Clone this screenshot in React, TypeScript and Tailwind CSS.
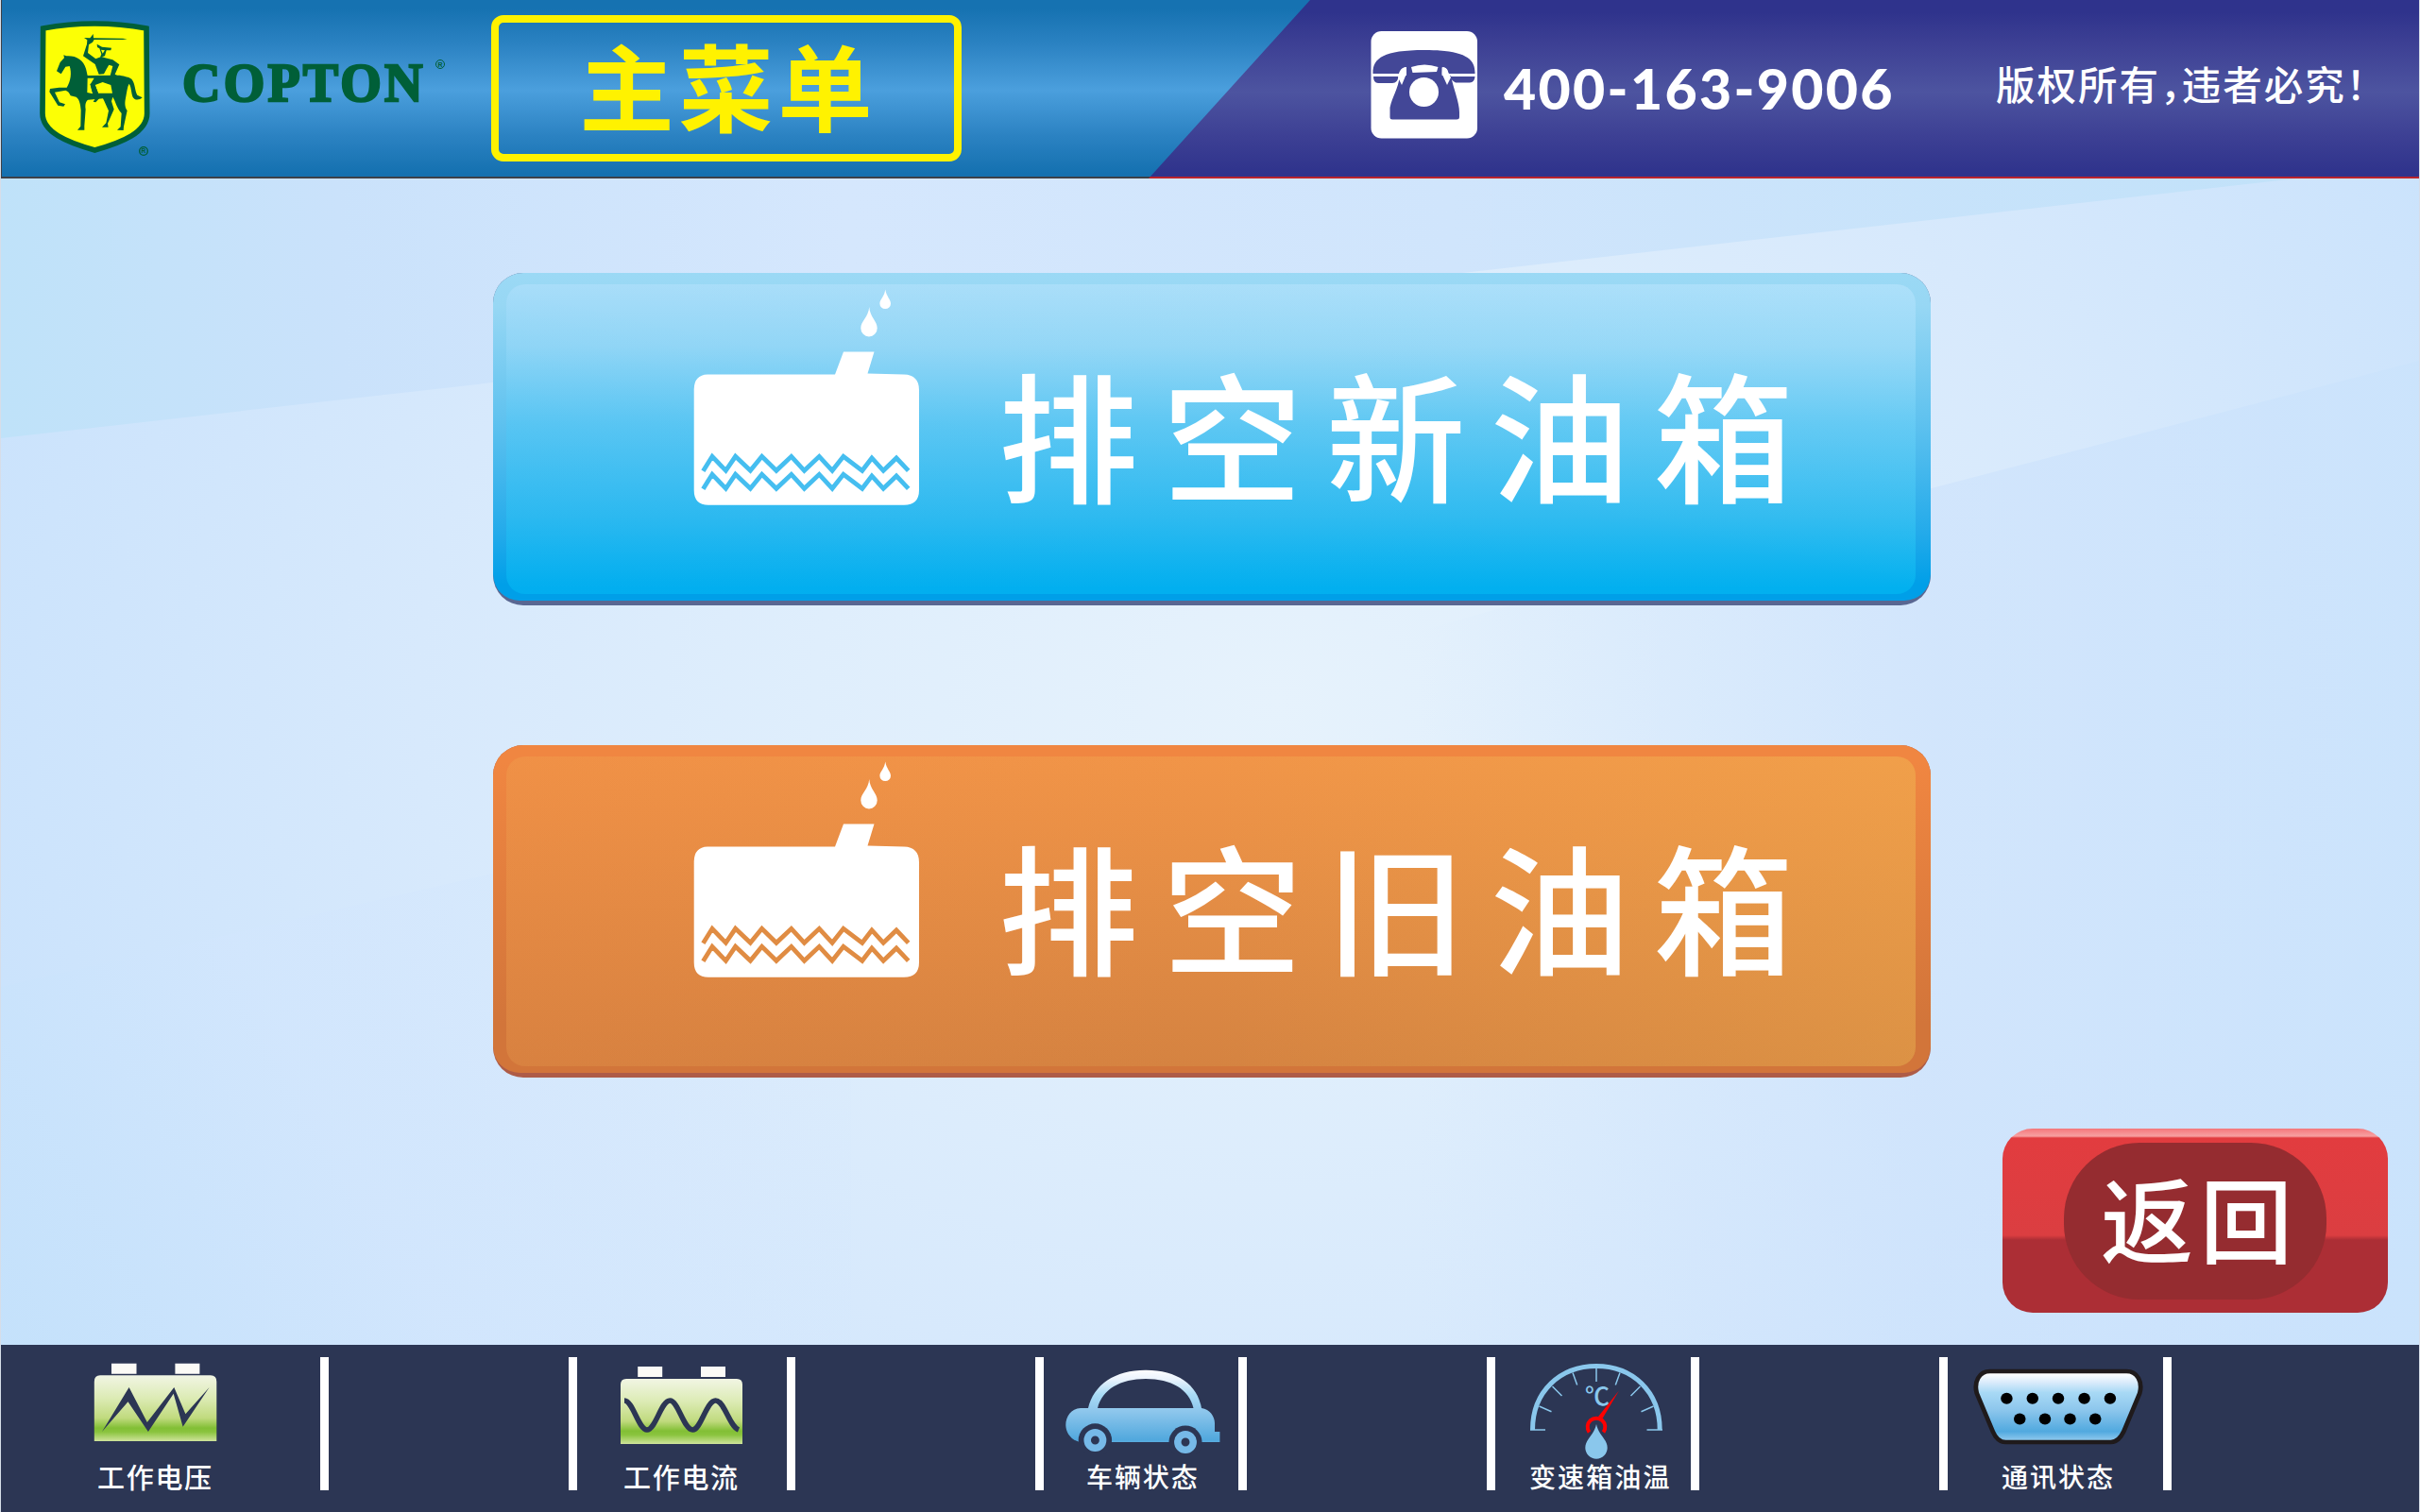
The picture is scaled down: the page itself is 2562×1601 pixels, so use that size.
import React from "react";

const CJK = "font-['Noto_Sans_CJK_SC',sans-serif]";

function Shield() {
  return (
    <svg viewBox="0 0 450 510" className="h-[170px] w-[150px] shrink-0">
      <path
        d="M47 60 Q210 30 375 60 L377 330 C377 390 300 422 211 447 C122 422 45 390 45 330 Z"
        fill="#fcff05"
        stroke="#005f38"
        strokeWidth="17"
        strokeLinejoin="miter"
      />
      <g fill="#005f38">
        <path
          fillRule="evenodd"
          d="M112 145 L121 148 C152 146 174 160 183 188 L188 210 L290 209 C308 213 318 214 328 221 C340 235 338 258 346 272 L362 280 C352 289 338 289 332 279 C326 262 327 245 320 236 C314 246 313 262 309 282 C305 300 308 314 314 321 L303 372 L302 384 L282 383 L293 373 L296 330 C280 312 278 294 268 278 L264 292 L272 317 L252 362 L254 374 L234 374 L247 361 L255 322 C247 305 242 292 237 283 L190 287 C182 291 180 302 182 317 L178 370 L178 383 L156 383 L166 371 L167 320 C165 296 161 285 152 278 L134 274 C130 264 125 259 118 257 L84 263 L99 295 L117 301 L112 308 L94 305 L67 262 L69 252 L98 248 L122 248 C135 228 138 200 131 180 L118 182 L104 205 L90 196 L101 168 L114 154 Z M188 218 L187 264 L205 268 L197 238 L209 218 Z M212 240 L236 231 L262 240 L267 266 L222 266 Z"
        />
        <path d="M177 90 L196 91 L206 78 L207 91 L300 92 L314 94 L300 96 L209 96 L204 104 L192 112 L189 138 L214 157 L232 150 L244 154 L268 160 L289 175 L275 206 L284 211 L260 211 L268 180 L256 176 L248 190 L240 205 L224 206 L212 174 L174 148 L186 110 L187 97 Z" />
        <path d="M218 110 L234 119 L264 122 L262 130 L248 130 L243 148 L228 152 L232 142 L226 124 L219 120 Z" />
        <path d="M196 236 L212 240 L222 266 L228 280 L214 295 L206 293 L214 281 L204 266 Z" />
      </g>
      <path d="M231 128 L243 130 L236 140 Z" fill="#fcff05" />
      <circle cx="366" cy="450" r="13" fill="none" stroke="#005f38" strokeWidth="4" />
      <text x="366" y="457" fontSize="20" fontWeight="700" textAnchor="middle" fill="#005f38" fontFamily="Liberation Sans, sans-serif">R</text>
    </svg>
  );
}

function Phone() {
  return (
    <svg viewBox="1451 33 113 114" className="ml-[235px] mt-[33px] h-[114px] w-[113px] shrink-0">
      <rect x="1451.5" y="33" width="112.5" height="113.5" rx="11" fill="#fff" />
      <g fill="#434797">
        <path d="M1453.5 78 C1453 62 1464 53 1508 53 C1551 53 1562 62 1561.5 78 L1533 78 C1533 73 1530 71 1526.500 72 L1526.500 80 L1536 80 C1539 95 1545 108 1545 119 L1545 124 Q1545 126.500 1542 126.500 L1474 126.500 Q1471.500 126.500 1471.500 124 L1471.500 114 C1474 102 1480 95 1482 80 L1489 80 L1489 72 C1485 71 1482 74 1481 78 Z" />
        <path d="M1454 81 L1480.500 81 C1480 85 1478 88 1474 88 L1459 88 Q1454 88 1454 81 Z" />
        <path d="M1535 81 L1561.500 81 Q1561 87 1556 87.500 L1541 87.500 C1538 86 1536 84 1535 81 Z" />
      </g>
      <path d="M1489 71 Q1484 71 1482.500 76 L1480 82 L1484 90 L1489 78 Z" fill="#fff" />
      <path d="M1526.500 71 Q1532 71 1533 76 L1536 82 L1532 90 L1526.500 78 Z" fill="#fff" />
      <path d="M1489 69 L1526.500 69 L1526 82 L1530 92 L1486 92 L1489 82 Z" fill="#434797" />
      <path d="M1453 79.500 H1482 M1534 79.500 H1562" stroke="#fff" strokeWidth="1.600" />
      <path d="M1494 71 Q1508 66 1522.500 71 L1521 76 L1495.500 77 Z" fill="#fff" />
      <circle cx="1507.500" cy="97.500" r="15.500" fill="#fff" />
    </svg>
  );
}

function Tank({ wave }: { wave: string }) {
  const pts =
    "744.4,498.7 754,483.300 768.4,498.300 778.6,483.300 794.4,498.300 806.6,483.300 821.9,498.300 837.8,483.300 851.5,498.300 867.3,483.300 881.1,498.300 892.9,483.300 912.8,498.300 923,485 935.2,498.300 949,485 961.7,498.300";
  return (
    <svg viewBox="734 305 240 231" className="h-[231px] w-[240px] shrink-0">
      <g fill="#fff">
        <path d="M749 396.500 H884 L893 372.500 H925.500 L918.5 395.500 L957 396.500 Q973 397 973 413 V519 Q973 534.700 957 534.700 H750 Q734.700 534.700 734.700 519 V412 Q735 397 749 396.500 Z" />
        <path d="M937.200 306.500 C938.500 314 943 317 943 321.500 A5.800 5.600 0 0 1 931.400 321.500 C931.400 317 936.500 314 937.200 306.500 Z" />
        <path d="M920.200 325 C921 336 928.700 340 928.700 347.500 A8.700 9 0 0 1 911.300 347.500 C911.300 340 919.500 336 920.200 325 Z" />
      </g>
      <g fill="none" stroke={wave} strokeWidth="4.800">
        <polyline points={pts} />
        <polyline points={pts} transform="translate(0 19)" />
      </g>
    </svg>
  );
}

function TankButton({ label, outer, inner, strip, wave }: { label: string; outer: string; inner: string; strip: string; wave: string }) {
  return (
    <button className={`flex h-[352px] w-[1522px] flex-col overflow-hidden rounded-[32px] ${strip}`}>
      <div className={`h-[347px] w-full shrink-0 rounded-b-[28px] pl-[14px] pt-[12px] ${outer}`}>
        <div className={`flex h-[328px] w-[1492px] items-start rounded-[20px] pl-[198px] pt-[4px] ${inner}`}>
          <Tank wave={wave} />
          <span className={`ml-[83px] mt-[52px] whitespace-nowrap text-[148px] font-medium leading-[200px] tracking-[25.4px] text-white ${CJK}`}>
            {label}
          </span>
        </div>
      </div>
    </button>
  );
}

function BatteryDefs({ id }: { id: string }) {
  return (
    <defs>
      <linearGradient id={id} x1="0" y1="0" x2="0" y2="1">
        <stop offset="0" stopColor="#f1f5e4" />
        <stop offset="0.35" stopColor="#dcebb4" />
        <stop offset="0.65" stopColor="#c0da7e" />
        <stop offset="0.8" stopColor="#82bf35" />
        <stop offset="0.86" stopColor="#8ac43e" />
        <stop offset="1" stopColor="#cfe39b" />
      </linearGradient>
    </defs>
  );
}

function VoltageIcon() {
  return (
    <svg viewBox="99 1443 131 84" className="h-[84px] w-[131px]">
      <BatteryDefs id="bat1" />
      <path d="M118 1443.700 h26.500 v11 h-26.500 Z M185.400 1443.700 h26 v11 h-26 Z" fill="#fbfaf6" />
      <path d="M99.800 1526 V1463 Q99.800 1456.300 106 1456.300 H223 Q229.300 1456.300 229.300 1463 V1526 Z" fill="url(#bat1)" />
      <path d="M108 1516 L136.600 1469 L155.800 1506 L184.300 1469 L196.400 1497.300 L221.600 1469 L193.600 1510.700 L183.700 1475.700 L156.900 1516 L135.500 1484.300 Z" fill="#2c3654" />
    </svg>
  );
}

function CurrentIcon() {
  return (
    <svg viewBox="656 1446 131 84" className="h-[84px] w-[131px]">
      <BatteryDefs id="bat2" />
      <path d="M675.200 1447 h26 v11 h-26 Z M742 1447 h26 v11 h-26 Z" fill="#fbfaf6" />
      <path d="M657 1529 V1466 Q657 1460 663 1460 H780 Q786 1460 786 1466 V1529 Z" fill="url(#bat2)" />
      <path
        d="M661 1483 C670 1483 676 1514 685 1514 C694 1514 700 1483 709.200 1483 C718 1483 724 1514 733.300 1514 C742 1514 748 1483 757.500 1483 C767 1483 772 1510 782 1514"
        fill="none"
        stroke="#2c3654"
        strokeWidth="5.600"
      />
    </svg>
  );
}

function CarIcon() {
  return (
    <svg viewBox="1127 1450 166 90" className="h-[90px] w-[166px]">
      <defs>
        <linearGradient id="car" gradientUnits="userSpaceOnUse" x1="0" y1="1450" x2="0" y2="1539">
          <stop offset="0" stopColor="#ffffff" />
          <stop offset="0.12" stopColor="#eaf3fd" />
          <stop offset="0.3" stopColor="#a9dbf5" />
          <stop offset="0.5" stopColor="#8dc6ec" />
          <stop offset="0.84" stopColor="#51a8dd" />
          <stop offset="1" stopColor="#92caef" />
        </linearGradient>
      </defs>
      <path
        fillRule="evenodd"
        fill="url(#car)"
        d="M1144 1491 H1152 C1158 1466 1180 1450.700 1213 1450.700 C1246 1450.700 1268 1466 1272 1491 C1281 1492 1286 1500 1286 1507 V1516 H1291.400 V1527 H1144 C1133 1525 1128.300 1516 1128.300 1509 C1128.300 1500 1134 1491.500 1144 1491 Z M1162 1491 H1263.500 C1259 1471 1240 1460 1213 1460 C1186 1460 1167 1471 1162 1491 Z"
      />
      <g fill="#2c3654">
        <circle cx="1159.400" cy="1525" r="17.700" />
        <circle cx="1255" cy="1527" r="17.500" />
      </g>
      <g fill="none" stroke="#76b9e8" strokeWidth="7.500">
        <circle cx="1159.400" cy="1525" r="8.200" />
        <circle cx="1255" cy="1527" r="8.200" />
      </g>
    </svg>
  );
}

function GaugeIcon() {
  return (
    <svg viewBox="1618 1443 144 103" className="h-[103px] w-[144px]">
      <path d="M1622.500 1514 C1622.500 1473 1652 1446.500 1690 1446.500 C1728 1446.500 1757.200 1473 1757.200 1514" fill="none" stroke="#8ac7ec" strokeWidth="5" />
      <path
        d="M1620 1514 H1636 M1743.500 1514 H1760 M1690 1448 V1463 M1665 1453.500 L1669.700 1466.500 M1715 1453.500 L1710.300 1466.500 M1643.500 1468 L1653.500 1478 M1736.500 1468 L1726.500 1478 M1629.500 1489 L1642.500 1494.700 M1750.500 1489 L1737.500 1494.700"
        fill="none"
        stroke="#8ac7ec"
        strokeWidth="1.500"
      />
      <text x="1678" y="1488" fontSize="26" fontWeight="500" fill="#8ac7ec" fontFamily="Noto Sans CJK SC, sans-serif">℃</text>
      <path d="M1714 1472.500 L1696.500 1502 L1692 1500 Z" fill="#ff0000" />
      <path d="M1682.500 1516.500 A9.300 9.300 0 1 1 1697.500 1516.500" fill="none" stroke="#ff0000" strokeWidth="4" />
      <path d="M1690 1508 C1692 1519 1701.700 1524 1701.700 1533 A11.700 11.700 0 0 1 1678.300 1533 C1678.300 1524 1688 1519 1690 1508 Z" fill="#8ac7ec" />
    </svg>
  );
}

function PortIcon() {
  return (
    <svg viewBox="2084 1448 176 83" preserveAspectRatio="none" className="h-[83px] w-[183px]">
      <defs>
        <linearGradient id="port" x1="0" y1="0" x2="0" y2="1">
          <stop offset="0.03" stopColor="#ffffff" />
          <stop offset="0.15" stopColor="#dcecfb" />
          <stop offset="0.3" stopColor="#a8d9f5" />
          <stop offset="0.55" stopColor="#8cc6ec" />
          <stop offset="0.85" stopColor="#51a9df" />
          <stop offset="1" stopColor="#9bcff1" />
        </linearGradient>
      </defs>
      <path
        d="M2103 1452 H2242 C2253 1452 2258.500 1463 2255.500 1475 L2239 1516 Q2234 1527 2226 1527 H2119 Q2110.500 1527 2106 1516 L2089.500 1475 C2086.500 1463 2092 1452 2103 1452 Z"
        fill="url(#port)"
        stroke="#1f1a1b"
        strokeWidth="4.600"
      />
      {[2120, 2146.300, 2172.500, 2199, 2225.300].map((x) => (
        <circle key={x} cx={x} cy="1480.700" r="6" />
      ))}
      {[2133.300, 2159, 2184.500, 2210.200].map((x) => (
        <circle key={x} cx={x} cy="1502.500" r="6" />
      ))}
    </svg>
  );
}

function Divider() {
  return <div className="mt-[13px] h-[141px] w-[9px] shrink-0 bg-white" />;
}

function Status({ cell, icon, label, text }: { cell: string; icon: React.ReactNode; label: string; text: string }) {
  return (
    <div className={`flex shrink-0 flex-col pt-[19px] ${cell}`}>
      <div className="h-[103px]">{icon}</div>
      <span className={`whitespace-nowrap font-medium leading-[34px] text-white ${CJK} ${text}`}>{label}</span>
    </div>
  );
}

function Backdrop() {
  return (
    <svg viewBox="0 189 2560 1235" preserveAspectRatio="none" className="absolute inset-0 h-full w-full">
      <defs>
        <radialGradient id="glow" gradientUnits="userSpaceOnUse" cx="1350" cy="740" r="1400" gradientTransform="translate(0 150) scale(1 .8)">
          <stop offset="0" stopColor="#e6f2fc" />
          <stop offset="0.35" stopColor="#dfeefc" />
          <stop offset="0.65" stopColor="#d7e9fc" />
          <stop offset="1" stopColor="#cbe3fc" />
        </radialGradient>
        <linearGradient id="ray" gradientUnits="userSpaceOnUse" x1="0" y1="300" x2="2560" y2="200">
          <stop offset="0" stopColor="#bfe2f9" />
          <stop offset="0.14" stopColor="#cae2fb" />
          <stop offset="0.35" stopColor="#d5e7fd" />
          <stop offset="0.6" stopColor="#d0e5fc" />
          <stop offset="1" stopColor="#bfe1f9" />
        </linearGradient>
        <linearGradient id="side" gradientUnits="userSpaceOnUse" x1="1500" y1="0" x2="2560" y2="0">
          <stop offset="0" stopColor="#cbe1fc" stopOpacity="0" />
          <stop offset="0.5" stopColor="#cbe1fc" stopOpacity="0.8" />
          <stop offset="1" stopColor="#cae3fc" />
        </linearGradient>
        <linearGradient id="low" gradientUnits="userSpaceOnUse" x1="0" y1="1400" x2="900" y2="900">
          <stop offset="0" stopColor="#c3e1fb" />
          <stop offset="0.4" stopColor="#d2e6fd" />
          <stop offset="1" stopColor="#d7e9fd" stopOpacity="0" />
        </linearGradient>
      </defs>
      <rect x="0" y="189" width="2560" height="1235" fill="url(#glow)" />
      <path d="M0 189 H2560 V180 L2430 189 L0 464 Z" fill="url(#ray)" />
      <path d="M2560 382 L2040 518 L1100 780 V1424 H2560 Z" fill="url(#side)" opacity="0.7" />
      <path d="M0 1045 L520 925 L900 840 L900 1424 L0 1424 Z" fill="url(#low)" opacity="0.8" />
    </svg>
  );
}

export default function App() {
  return (
    <div className="flex h-[1601px] w-[2562px] flex-col overflow-hidden bg-[#d6dde8] px-px">
      <header className="flex h-[189px] shrink-0 border-b-2 border-l border-[#3d4148] bg-[linear-gradient(#1672b1_5%,#2b82c2_25%,#4b9fdd_51%,#2b82c2_77%,#1571b0_98%)]">
        <div className="flex w-[1214px] shrink-0">
          <div className="ml-[28px] mt-[10px]">
            <Shield />
          </div>
          <div className="ml-[13px] mt-[56px] w-[264px] whitespace-nowrap font-['Liberation_Serif',serif] text-[56px] font-bold leading-[64px] tracking-[3.2px] text-[#005f38] [-webkit-text-stroke:2.4px_#005f38]">
            COPTON
          </div>
          <div className="ml-[4px] mt-[63px] flex h-[10px] w-[10px] items-center justify-center rounded-full border-[1.5px] border-[#005f38] font-['Liberation_Sans',sans-serif] text-[7px] font-bold leading-none text-[#005f38]">
            R
          </div>
          <div className="ml-[49px] mt-[16px] flex h-[155px] w-[498px] items-start justify-center rounded-[13px] border-8 border-[#fff200] pl-[4px] pt-[5px]">
            <span className={`whitespace-nowrap text-[100px] font-bold leading-[120px] tracking-[5px] text-[#fff200] ${CJK}`}>主菜单</span>
          </div>
        </div>
        <div className="flex h-[189px] w-[1345px] shrink-0 border-b-2 border-[#b9242d] bg-[linear-gradient(#2f338c_7%,#3d4094_25%,#4d54a0_52%,#3d4094_77%,#2f338c_98%)] [clip-path:polygon(171px_0,100%_0,100%_100%,0_100%)]">
          <Phone />
          <span className="ml-[28px] mt-[54px] w-[440px] whitespace-nowrap font-['Lato',sans-serif] text-[59px] font-black leading-[80px] tracking-[2.3px] text-white">
            400-163-9006
          </span>
          <span className={`ml-[81px] mt-[57px] whitespace-nowrap text-[41.500px] font-medium leading-[62px] tracking-[2px] text-white [font-feature-settings:'halt'] ${CJK}`}>
            版权所有，违者必究！
          </span>
        </div>
      </header>

      <main className="relative h-[1235px] shrink-0">
        <Backdrop />
        <div className="relative flex h-full flex-col">
          <div className="ml-[521px] mt-[100px] flex flex-col gap-[148px]">
            <TankButton
              label="排空新油箱"
              strip="bg-[#596792]"
              outer="bg-[linear-gradient(#9bd9f5_0%,#97d7f4_10%,#5fc2ef_45%,#22aaea_80%,#009fe8_95%)]"
              inner="bg-[linear-gradient(to_top_right,rgba(0,160,240,0.12),transparent_50%,rgba(200,240,255,0.15)),linear-gradient(#a8ddf9_0%,#92d6f6_20%,#5dc7f3_45%,#30bbf0_75%,#02b0ef_98%)]"
              wave="#45bef0"
            />
            <TankButton
              label="排空旧油箱"
              strip="bg-[#ae5c47]"
              outer="bg-[linear-gradient(#f08641_5%,#d2753a_85%)]"
              inner="bg-[linear-gradient(to_right,rgba(235,120,60,0.15),transparent_50%,rgba(240,190,80,0.25)),linear-gradient(#f19548_0%,#e48d45_45%,#d58341_100%)]"
              wave="#e08c43"
            />
          </div>
          <button className="ml-[2119px] mt-[54px] flex h-[195px] w-[408px] flex-col items-center overflow-hidden rounded-[32px] bg-[linear-gradient(#f4777b_0,#f7a0a1_8px,#e23c3f_10px,#db3e41_113px,#ac2e35_118px)] pt-[15px]">
            <div className="flex h-[166px] w-[278px] shrink-0 items-start justify-center rounded-[80px] bg-[#952c30] pl-[10px] pt-[17px]">
              <span className={`whitespace-nowrap text-[98px] font-medium leading-[120px] tracking-[7px] text-white ${CJK}`}>返回</span>
            </div>
          </button>
        </div>
      </main>

      <footer className="flex h-[177px] shrink-0 bg-[#2c3654]">
        <Status cell="w-[338px] pl-[98px]" icon={<VoltageIcon />} label="工作电压" text="pl-[4px] text-[29px] tracking-[1.7px]" />
        <Divider />
        <div className="w-[254px] shrink-0" />
        <Divider />
        <Status cell="w-[222px] pl-[45px]" icon={<div className="pt-[3px]"><CurrentIcon /></div>} label="工作电流" text="pl-[4px] text-[29px] tracking-[1.7px]" />
        <Divider />
        <div className="w-[254px] shrink-0" />
        <Divider />
        <Status cell="w-[206px] pl-[22px]" icon={<div className="pt-[7px]"><CarIcon /></div>} label="车辆状态" text="pl-[23px] text-[28px] tracking-[1.9px]" />
        <Divider />
        <div className="w-[254px] shrink-0" />
        <Divider />
        <Status cell="w-[207px] pl-[35px]" icon={<GaugeIcon />} label="变速箱油温" text="pl-[1px] text-[28px] tracking-[2.1px]" />
        <Divider />
        <div className="w-[254px] shrink-0" />
        <Divider />
        <Status cell="w-[228px] pl-[25px]" icon={<div className="pt-[5px]"><PortIcon /></div>} label="通讯状态" text="pl-[32px] text-[28px] tracking-[2px]" />
        <Divider />
      </footer>
    </div>
  );
}
